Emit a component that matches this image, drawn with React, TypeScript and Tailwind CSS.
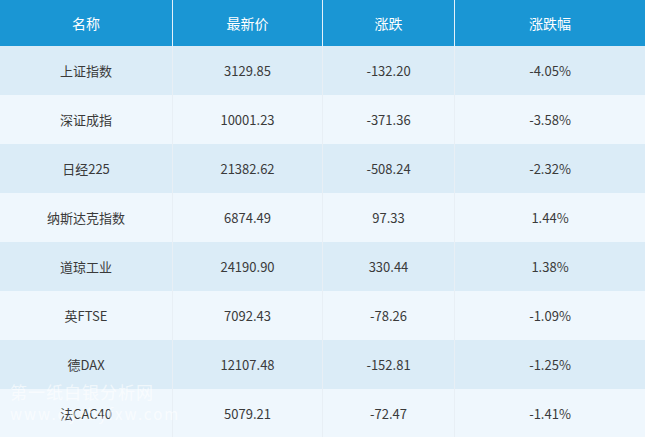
const rows = [
  ["上证指数", "3129.85", "-132.20", "-4.05%"],
  ["深证成指", "10001.23", "-371.36", "-3.58%"],
  ["日经225", "21382.62", "-508.24", "-2.32%"],
  ["纳斯达克指数", "6874.49", "97.33", "1.44%"],
  ["道琼工业", "24190.90", "330.44", "1.38%"],
  ["英FTSE", "7092.43", "-78.26", "-1.09%"],
  ["德DAX", "12107.48", "-152.81", "-1.25%"],
  ["法CAC40", "5079.21", "-72.47", "-1.41%"],
];

const headers = ["名称", "最新价", "涨跌", "涨跌幅"];

export default function App() {
  return (
    <div
      className="relative w-[645px] h-[437px] overflow-hidden bg-[#eff7fd]"
      style={{ fontFamily: '"Microsoft YaHei", "Noto Sans CJK SC", sans-serif' }}
    >
      <div className="grid grid-cols-[173px_150px_132px_190px] h-[46px] bg-[#1a96d4] text-white text-[14px]">
        {headers.map((h, i) => (
          <div
            key={h}
            className={`flex items-center justify-center ${i < 3 ? "border-r border-[#e4f1fa]" : ""}`}
          >
            {h}
          </div>
        ))}
      </div>

      {rows.map((row, r) => (
        <div
          key={row[0]}
          className={`grid grid-cols-[173px_150px_132px_190px] h-[49px] text-[13px] text-[#3a3a3a] ${
            r % 2 === 0 ? "bg-[#dbecf7]" : "bg-[#eff7fd]"
          }`}
        >
          {row.map((cell, i) => (
            <div
              key={i}
              className={`flex items-center justify-center ${i < 3 ? "border-r border-[#e8eff5]" : ""}`}
            >
              {cell}
            </div>
          ))}
        </div>
      ))}

      {/* watermark */}
      <div className="absolute left-[10px] top-[383px] text-white/60 leading-none pointer-events-none">
        <div className="text-[17px] tracking-[1px]">第一纸白银分析网</div>
        <div className="mt-[6px] text-[15px] tracking-[2px]">www.dyzbyfxw.com</div>
      </div>
    </div>
  );
}
